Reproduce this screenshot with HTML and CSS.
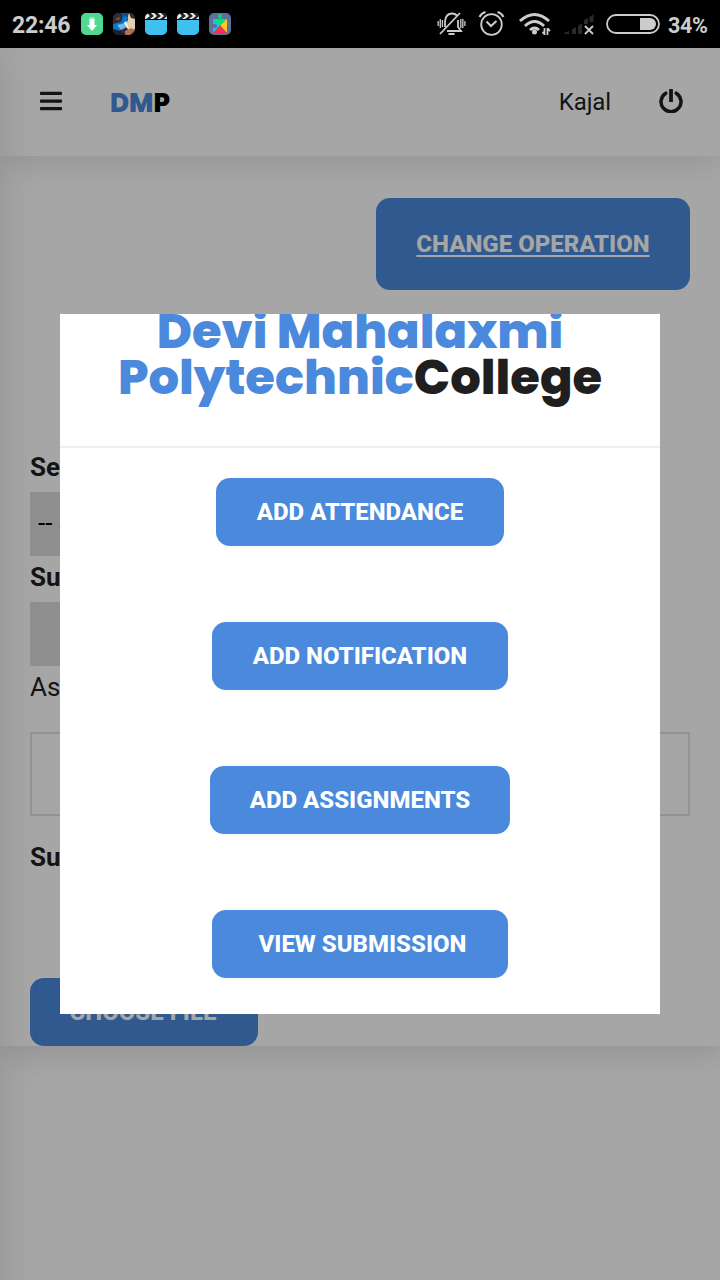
FILE: index.html
```html
<!DOCTYPE html>
<html lang="en">
<head>
<meta charset="utf-8">
<title>DMP</title>
<link rel="stylesheet" href="styles.css">
</head>
<body>
<div class="status">
  <span class="clock">22:46</span>
  <div class="apps">
    <svg width="22" height="22" viewBox="0 0 22 22"><rect width="22" height="22" rx="5" fill="#50d890"/><path d="M8.500 4h5v2h-5z" fill="#9be9bf"/><path d="M8.500 6h5v6H16l-5 6-5-6h2.500z" fill="#fff"/></svg>
    <svg width="22" height="22" viewBox="0 0 22 22"><defs><clipPath id="c"><rect width="22" height="22" rx="5"/></clipPath></defs><g clip-path="url(#c)"><rect width="22" height="22" fill="#302c35"/><path d="M9 0h7l-2 5-5 3z" fill="#0d4f91"/><path d="M0 11l8-2 3-6 4 1-2 9-7 5-6-1z" fill="#0877c7"/><path d="M15 3l1-3 2 5 4 1v10l-6 2-4-6 3-5z" fill="#e4ceb1"/><path d="M4 12l8-2 2 4-6 3z" fill="#71b8e8"/><path d="M11 10l2-2 3 9z" fill="#fff"/><path d="M12 18l6-3 4 2-5 5h-5z" fill="#b9714b"/><path d="M0 16l7 2 6 4H0z" fill="#1d2026"/><path d="M2 6l5-2-1 3z" fill="#a84f33"/></g></svg>
    <svg width="22" height="22" viewBox="0 0 22 22"><path d="M0 7h22v10a5 5 0 0 1-5 5H5a5 5 0 0 1-5-5z" fill="#3fc0ee"/><path d="M0 5a5 5 0 0 1 5-5h12a5 5 0 0 1 5 5v1H0z" fill="#eee"/><path d="M2 0h4l3 3-4 3H1l4-3zM9 0h4l3 3-4 3H8l4-3zM16 0h4l2 3-3 3h-4l4-3z" fill="#222"/></svg>
    <svg width="22" height="22" viewBox="0 0 22 22"><path d="M0 7h22v10a5 5 0 0 1-5 5H5a5 5 0 0 1-5-5z" fill="#3fc0ee"/><path d="M0 5a5 5 0 0 1 5-5h12a5 5 0 0 1 5 5v1H0z" fill="#eee"/><path d="M2 0h4l3 3-4 3H1l4-3zM9 0h4l3 3-4 3H8l4-3zM16 0h4l2 3-3 3h-4l4-3z" fill="#222"/></svg>
    <svg width="22" height="22" viewBox="0 0 22 22"><rect width="22" height="22" rx="5" fill="#5d6f9b"/><path d="M4 6h14v14H4v-5h2a2 2 0 0 0 0-4H4z" fill="#20bce9"/><path d="M4 6h14l-7 7z" fill="#00e676"/><path d="M18 6v14l-7-7z" fill="#ffc825"/><path d="M4 20l7-8 7 8z" fill="#f43251"/><circle cx="11" cy="3" r="2" fill="#00d77b"/><path d="M10 4h2v4h-2z" fill="#00d77b"/></svg>
  </div>
  <svg class="signals" width="226" height="48" viewBox="434 0 226 48" fill="none" stroke="#ccc" stroke-width="1.800">
    <path d="M445 27v-6q1-7.500 7-7.500 3 0 5 2M458 20v7l3 4H447M440 34l20-21M448.500 34h6"/>
    <path d="M438.200 21v5M440.300 19v9M442.400 20v7M460.800 19v9M462.800 19v9M464.900 21v5" stroke-width="1.300"/>
    <circle cx="491.500" cy="24.500" r="10.300"/><path d="M486.500 21.500l4.500 4.500 5.500-5" stroke-width="2"/><path d="M479.500 17q2-4 6-5M503.500 17q-2-4-6-5" stroke-width="2"/>
    <g stroke-width="3"><path d="M520 21q14.500-13 29 0M525 26q9.500-9 19 0M530 30q4.500-4 9 0"/></g><circle cx="534.500" cy="32" r="2.500" fill="#ccc" stroke="none"/>
    <path d="M544.500 28v7M547.500 28v7M542.500 32l2 2M550 31l-2-2"/>
    <path d="M564 34v-1l5-2v3zM572 34v-5l4-2v7zM578 34v-8l4-3v11zM584 24v-4l4-2v6zM589.500 22v-5l4-3v8z" fill="#292929" stroke="none"/>
    <path d="M585 26l8 8M593 26l-8 8"/>
    <rect x="607" y="15" width="52" height="18" rx="9"/><path d="M640 18h10a6 6 0 0 1 0 12h-10z" fill="#ccc" stroke="none"/>
  </svg>
  <span class="percent">34%</span>
</div>
<div class="page">
  <header class="header">
    <svg width="22" height="20" viewBox="0 0 22 20" fill="#1f1f1f"><rect y=".7" width="22" height="3.300" rx=".8"/><rect y="8.500" width="22" height="3.300" rx=".8"/><rect y="16" width="22" height="3.300" rx=".8"/></svg>
    <span class="brand"><b>DM</b>P</span>
    <span class="user">Kajal</span>
    <svg class="power" width="24" height="24" viewBox="0 0 24 24" fill="none" stroke="#1f1f1f" stroke-width="3.500" stroke-linecap="round"><path d="M6.800 4.200a10 10 0 1 0 10.400 0"/><path d="M12 0v13" stroke-linecap="butt" stroke-width="3.800"/></svg>
  </header>
  <main class="content">
    <a class="button change">CHANGE OPERATION</a>
    <form class="form">
      <label class="strong">Se</label>
      <div class="select">-- S</div>
      <label class="strong">Su</label>
      <div class="select"></div>
      <label>As</label>
      <div class="input"></div>
      <label class="strong">Su</label>
    </form>
    <a class="button choose">CHOOSE FILE</a>
  </main>
  <div class="drawer"></div>
  <div class="overlay">
    <section class="dialog">
      <h1 class="title"><span>Devi Mahalaxmi<br>Polytechnic</span>College</h1>
      <div class="actions">
        <a class="button attendance">ADD ATTENDANCE</a>
        <a class="button notification">ADD NOTIFICATION</a>
        <a class="button assignments">ADD ASSIGNMENTS</a>
        <a class="button submission">VIEW SUBMISSION</a>
      </div>
    </section>
  </div>
</div>
</body>
</html>
```
FILE: styles.css
```css
* { box-sizing: border-box; }
body { margin: 0; width: 720px; height: 1280px; overflow: hidden; font-family: Roboto, "Liberation Sans", sans-serif; color: #1f1f1f; }
svg { display: block; flex: none; }
.status { height: 48px; background: #000; color: #ccc; display: flex; align-items: center; padding-left: 12px; font-weight: 700; white-space: nowrap; }
.clock { width: 69px; font-size: 23px; line-height: 46px; padding-top: 3px; letter-spacing: -.2px; }
.apps { display: flex; gap: 10px; width: 353px; }
.percent { font-size: 21.500px; padding-left: 8px; padding-top: 2px; letter-spacing: -.3px; }
.page { position: relative; height: 1232px; overflow: hidden; background: #fff; }
.header { position: relative; z-index: 1; height: 108px; display: flex; align-items: center; padding: 0 37px 2px 40px; background: #fff; box-shadow: 0 8px 30px rgba(0,0,0,.1); }
.brand { width: 150px; margin-left: 48px; padding-top: 4px; font: 800 26px/32px Poppins, Inter, sans-serif; color: #000; }
.brand b { font-weight: 800; color: #4a89dc; }
.user { margin-left: auto; font-size: 24px; padding-top: 2px; letter-spacing: -.1px; }
.power { margin-left: 48px; }
.content { height: 890px; padding: 42px 30px 0; display: flex; flex-direction: column; align-items: flex-start; box-shadow: 0 8px 30px rgba(0,0,0,.12); }
.button { display: flex; align-items: center; justify-content: center; flex: none; height: 68px; border-radius: 14px; background: #4a89dc; color: #fff; font-size: 24px; font-weight: 800; white-space: nowrap; }
.change { width: 314px; height: 92px; align-self: flex-end; text-decoration: underline; text-decoration-thickness: 2px; text-underline-offset: 3px; }
.form { width: 660px; margin-top: 156px; height: 532px; font-size: 26px; }
.form label { display: block; height: 46px; line-height: 42px; }
.strong { font-weight: 700; }
.select { width: 360px; height: 64px; padding-left: 8px; background: #dcdcdc; color: #000; font-size: 26px; line-height: 62px; }
.input { height: 84px; margin: 20px 0; border: 2px solid #e2e2e2; }
.choose { width: 228px; padding-right: 2px; }
.drawer { position: absolute; z-index: 2; left: -200px; top: 0; width: 200px; height: 1300px; box-shadow: 0 0 40px rgba(0,0,0,.12); }
.overlay { position: absolute; z-index: 3; inset: 0; background: rgba(0,0,0,.35); padding: 266px 60px 0; }
.dialog { height: 700px; overflow: hidden; background: #fff; }
.title { height: 139px; margin: -5px 0 0; border-bottom: 2px solid #eee; text-align: center; white-space: nowrap; font: 800 48px/46px Poppins, Inter, sans-serif; }
.title span { color: #4a89dc; }
.actions { padding-top: 30px; display: flex; flex-direction: column; align-items: center; gap: 76px; }
.attendance { width: 288px; }
.notification, .submission { width: 296px; }
.submission { padding-left: 5px; }
.assignments { width: 300px; }
```
